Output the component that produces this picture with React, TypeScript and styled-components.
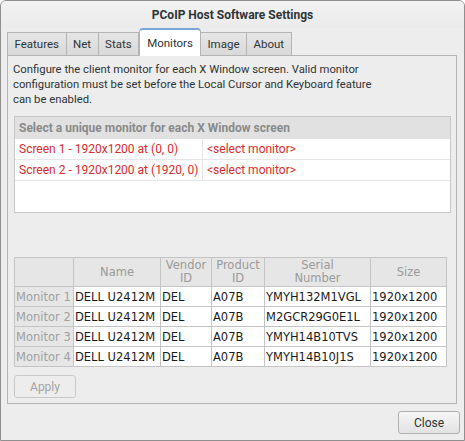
import * as React from "react";
import styled, { createGlobalStyle } from "styled-components";

interface Monitor {
  name: string;
  vendor: string;
  product: string;
  serial: string;
  size: string;
}

const monitors: Monitor[] = [
  { name: "DELL U2412M", vendor: "DEL", product: "A07B", serial: "YMYH132M1VGL", size: "1920x1200" },
  { name: "DELL U2412M", vendor: "DEL", product: "A07B", serial: "M2GCR29G0E1L", size: "1920x1200" },
  { name: "DELL U2412M", vendor: "DEL", product: "A07B", serial: "YMYH14B10TVS", size: "1920x1200" },
  { name: "DELL U2412M", vendor: "DEL", product: "A07B", serial: "YMYH14B10J1S", size: "1920x1200" },
];

const screens = ["Screen 1 - 1920x1200 at (0, 0)", "Screen 2 - 1920x1200 at (1920, 0)"];

const tabs = ["Features", "Net", "Stats", "Monitors", "Image", "About"];

// widths of the monitor table columns
const cols = [59, 87, 51, 53, 106, 76];

const GlobalStyle = createGlobalStyle`
  html, body {
    margin: 0;
    padding: 0;
    background: #ffffff;
  }
  * {
    box-sizing: border-box;
  }
`;

const Window = styled.div`
  width: 465px;
  height: 441px;
  display: flex;
  flex-direction: column;
  background: #ededed;
  border: 1px solid #8f8f8f;
  border-radius: 6px 6px 0 0;
  font-family: Roboto, "Open Sans", sans-serif;
  font-size: 12px;
  color: #2e3436;
  overflow: hidden;
`;

const TitleBar = styled.div`
  height: 27px;
  display: flex;
  align-items: center;
  justify-content: center;
  font-weight: bold;
  font-size: 12px;
  color: #2e3436;
  background: linear-gradient(#f2f2f2, #ebebeb);
`;

const Body = styled.div`
  display: flex;
  flex-direction: column;
  padding: 1px 6px 0 6px;
`;

const TabBar = styled.div`
  display: flex;
  align-items: flex-end;
  height: 27px;
  margin-bottom: -1px;
  position: relative;
  z-index: 1;
`;

const Tab = styled.div<{ $active?: boolean }>`
  height: ${(p) => (p.$active ? "28px" : "24px")};
  padding: 0 ${(p) => (p.$active ? "7px" : "6.5px")};
  display: flex;
  align-items: center;
  font-size: 11.5px;
  border: 1px solid #b4b4b4;
  border-left-width: ${(p) => (p.$active ? "1px" : "0")};
  border-top: ${(p) => (p.$active ? "2px solid #7aa5db" : "1px solid #b4b4b4")};
  border-bottom: ${(p) => (p.$active ? "none" : "1px solid #b4b4b4")};
  border-radius: ${(p) => (p.$active ? "4px 4px 0 0" : "0")};
  background: ${(p) => (p.$active ? "#ffffff" : "linear-gradient(#e6e6e6, #d9d9d9)")};
  color: #2e3436;
  &:first-child {
    border-left-width: 1px;
  }
`;

const Page = styled.div`
  height: 349px;
  margin-right: 1px;
  border: 1px solid #b4b4b4;
  background: #ededed;
  padding: 6px 5px 0 5px;
  display: flex;
  flex-direction: column;
`;

const Description = styled.p`
  margin: 0 0 9px 0;
  font-size: 11.3px;
  line-height: 15px;
  color: #2e3436;
  white-space: nowrap;
`;

const ScreenList = styled.div`
  height: 97px;
  margin-left: 1px;
  border: 1px solid #c6c6c6;
  background: #ffffff;
`;

const ScreenHeader = styled.div`
  height: 22px;
  display: flex;
  align-items: center;
  padding-left: 4px;
  background: #e1e1e1;
  color: #8a8a8a;
  font-weight: bold;
`;

const ScreenRow = styled.div`
  height: 21px;
  display: grid;
  grid-template-columns: 187px 1fr;
  border-bottom: 1px solid #e6e6e6;
  color: #d82c2c;
`;

const ScreenCell = styled.div`
  display: flex;
  align-items: center;
  padding-left: 4px;
  white-space: nowrap;
  & + & {
    border-left: 1px solid #e6e6e6;
  }
`;

const Table = styled.table`
  margin: 44px 0 0 1px;
  width: 432px;
  table-layout: fixed;
  border-collapse: collapse;
  font-family: "DejaVu Sans", sans-serif;
  font-size: 11.5px;
  color: #1a1a1a;
  background: #ffffff;
`;

const Head = styled.th`
  height: 29px;
  padding: 0;
  border: 1px solid #c4c4c4;
  background: #e6e6e6;
  color: #9a9a9a;
  font-weight: normal;
  line-height: 13px;
  text-align: center;
`;

const RowHead = styled.th`
  height: 20px;
  padding: 0 0 0 1px;
  border: 1px solid #c4c4c4;
  background: #e6e6e6;
  color: #a0a0a0;
  font-weight: normal;
  text-align: left;
  white-space: nowrap;
  overflow: hidden;
`;

const Cell = styled.td`
  height: 20px;
  padding: 0 0 0 1px;
  border: 1px solid #c4c4c4;
  white-space: nowrap;
  overflow: hidden;
`;

const Button = styled.button<{ $disabled?: boolean }>`
  width: 62px;
  height: 23px;
  border: 1px solid ${(p) => (p.$disabled ? "#c9c9c9" : "#b0b0b0")};
  border-radius: 3px;
  background: ${(p) => (p.$disabled ? "#ededed" : "linear-gradient(#f6f6f6, #e2e2e2)")};
  color: ${(p) => (p.$disabled ? "#a4a4a4" : "#2e3436")};
  font-family: Roboto, "Open Sans", sans-serif;
  font-size: 12px;
  padding: 0;
`;

const ApplyRow = styled.div`
  margin: 8px 0 0 1px;
`;

const Footer = styled.div`
  display: flex;
  justify-content: flex-end;
  padding: 7px 4px 0 0;
`;

export default () => {
  return (
    <>
      <GlobalStyle />
      <Window>
        <TitleBar>PCoIP Host Software Settings</TitleBar>
        <Body>
          <TabBar>
            {tabs.map((t) => (
              <Tab key={t} $active={t === "Monitors"}>
                {t}
              </Tab>
            ))}
          </TabBar>
          <Page>
            <Description>
              Configure the client monitor for each X Window screen. Valid monitor
              <br />
              configuration must be set before the Local Cursor and Keyboard feature
              <br />
              can be enabled.
            </Description>
            <ScreenList>
              <ScreenHeader>Select a unique monitor for each X Window screen</ScreenHeader>
              {screens.map((s) => (
                <ScreenRow key={s}>
                  <ScreenCell>{s}</ScreenCell>
                  <ScreenCell>&lt;select monitor&gt;</ScreenCell>
                </ScreenRow>
              ))}
            </ScreenList>
            <Table>
              <colgroup>
                {cols.map((w, i) => (
                  <col key={i} style={{ width: w }} />
                ))}
              </colgroup>
              <thead>
                <tr>
                  <Head />
                  <Head>Name</Head>
                  <Head>
                    Vendor
                    <br />
                    ID
                  </Head>
                  <Head>
                    Product
                    <br />
                    ID
                  </Head>
                  <Head>
                    Serial
                    <br />
                    Number
                  </Head>
                  <Head>Size</Head>
                </tr>
              </thead>
              <tbody>
                {monitors.map((m, i) => (
                  <tr key={m.serial}>
                    <RowHead>Monitor {i + 1}</RowHead>
                    <Cell>{m.name}</Cell>
                    <Cell>{m.vendor}</Cell>
                    <Cell>{m.product}</Cell>
                    <Cell>{m.serial}</Cell>
                    <Cell>{m.size}</Cell>
                  </tr>
                ))}
              </tbody>
            </Table>
            <ApplyRow>
              <Button $disabled>Apply</Button>
            </ApplyRow>
          </Page>
        </Body>
        <Footer>
          <Button>Close</Button>
        </Footer>
      </Window>
    </>
  );
};
